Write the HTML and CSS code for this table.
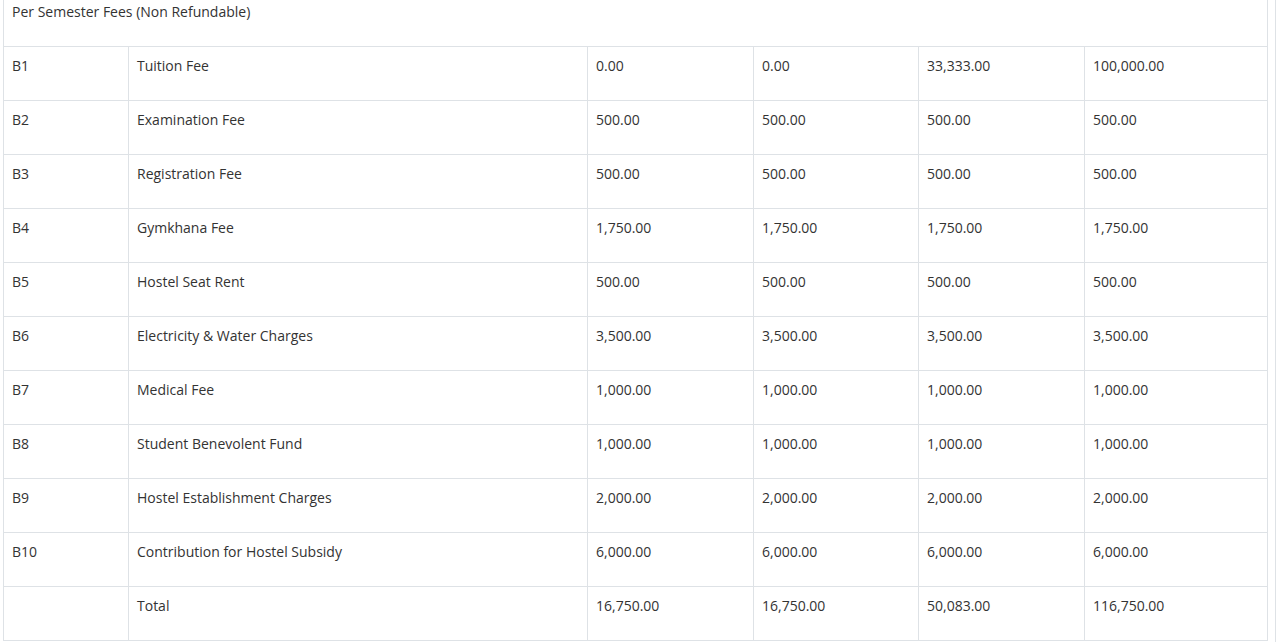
FILE: index.html
```html
<!DOCTYPE html>
<html>
<head>
<meta charset="utf-8">
<link rel="stylesheet" href="styles.css">
</head>
<body>
<div class="wrap">
<table class="fees">
<colgroup>
<col class="c-code"><col class="c-name"><col class="c-num"><col class="c-num2"><col class="c-num"><col class="c-last">
</colgroup>
<tbody>
<tr><td colspan="6">Per Semester Fees (Non Refundable)</td></tr>
<tr><td>B1</td><td>Tuition Fee</td><td>0.00</td><td>0.00</td><td>33,333.00</td><td>100,000.00</td></tr>
<tr><td>B2</td><td>Examination Fee</td><td>500.00</td><td>500.00</td><td>500.00</td><td>500.00</td></tr>
<tr><td>B3</td><td>Registration Fee</td><td>500.00</td><td>500.00</td><td>500.00</td><td>500.00</td></tr>
<tr><td>B4</td><td>Gymkhana Fee</td><td>1,750.00</td><td>1,750.00</td><td>1,750.00</td><td>1,750.00</td></tr>
<tr><td>B5</td><td>Hostel Seat Rent</td><td>500.00</td><td>500.00</td><td>500.00</td><td>500.00</td></tr>
<tr><td>B6</td><td>Electricity &amp; Water Charges</td><td>3,500.00</td><td>3,500.00</td><td>3,500.00</td><td>3,500.00</td></tr>
<tr><td>B7</td><td>Medical Fee</td><td>1,000.00</td><td>1,000.00</td><td>1,000.00</td><td>1,000.00</td></tr>
<tr><td>B8</td><td>Student Benevolent Fund</td><td>1,000.00</td><td>1,000.00</td><td>1,000.00</td><td>1,000.00</td></tr>
<tr><td>B9</td><td>Hostel Establishment Charges</td><td>2,000.00</td><td>2,000.00</td><td>2,000.00</td><td>2,000.00</td></tr>
<tr><td>B10</td><td>Contribution for Hostel Subsidy</td><td>6,000.00</td><td>6,000.00</td><td>6,000.00</td><td>6,000.00</td></tr>
<tr><td></td><td>Total</td><td>16,750.00</td><td>16,750.00</td><td>50,083.00</td><td>116,750.00</td></tr>
</tbody>
</table>
</div>
</body>
</html>
```
FILE: styles.css
```css
html, body {
  margin: 0;
  padding: 0;
  background: #fff;
  overflow: hidden;
}
body {
  font-family: "Open Sans", "Liberation Sans", sans-serif;
  font-size: 14px;
  color: #333;
}
.wrap {
  display: flow-root;
  width: 1272px;
  height: 642px;
  padding-left: 3px;
  border-right: 1px solid #dee2e6;
  overflow: hidden;
}
.fees {
  border-collapse: collapse;
  table-layout: fixed;
  width: 1264px;
  margin-top: -8px;
}
.c-code { width: 125px; }
.c-name { width: 459px; }
.c-num { width: 166px; }
.c-num2 { width: 165px; }
.c-last { width: 183px; }
.fees td {
  border: 1px solid #dee2e6;
  padding: 9px 8px 24px;
  line-height: 20px;
  vertical-align: top;
  text-align: left;
}
```
